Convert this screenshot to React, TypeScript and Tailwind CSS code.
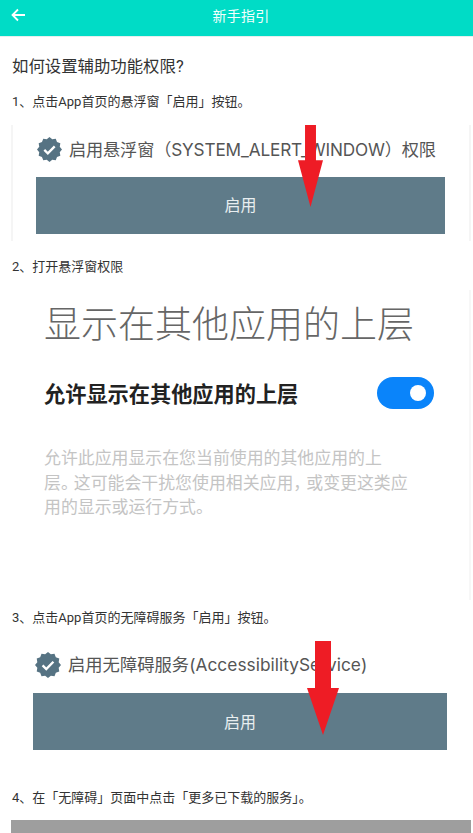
const cjk = "font-['Roboto','Noto_Sans_CJK_SC',sans-serif]";
const shot = "font-['Noto_Sans_CJK_SC',sans-serif]";
const mixed = "font-['Inter','Noto_Sans_CJK_SC',sans-serif]";

function Badge({ className }: { className: string }) {
  const pts: string[] = [];
  for (let i = 0; i < 24; i++) {
    const r = i % 2 === 0 ? 12 : 10.2;
    const a = (i * Math.PI) / 12;
    pts.push(`${12 + r * Math.cos(a)},${12 + r * Math.sin(a)}`);
  }
  return (
    <svg viewBox="0 0 24 24" className={className}>
      <polygon points={pts.join(" ")} fill="#567383" />
      <path d="M7 12.4l3.4 3.3L17 9" fill="none" stroke="#fff" strokeWidth="2.2" />
    </svg>
  );
}

function Arrow({ className, points }: { className: string; points: string }) {
  return (
    <svg viewBox="0 0 32 100" preserveAspectRatio="none" className={className}>
      <polygon points={points} fill="#ee1c25" />
    </svg>
  );
}

function Step({ children, className }: { children: string; className: string }) {
  return <p className={`px-3 text-[13px] leading-[18px] text-[#333] ${className}`}>{children}</p>;
}

export default function App() {
  return (
    <div className={`h-[833px] w-[473px] overflow-hidden bg-white ${cjk}`}>
      <header className="relative flex h-[37px] items-center justify-center border-b border-[#e4f0ee] bg-[#00dcc6] pb-[5px]">
        <svg viewBox="0 0 16 14" className="absolute left-[10px] top-[8px] h-[14px] w-[16px]">
          <path d="M15 7H2.500M8 1.500L2.500 7 8 12.500" fill="none" stroke="#fff" strokeWidth="1.800" />
        </svg>
        <h1 className="pl-[9px] text-sm font-normal tracking-[0.2px] text-[#f2fffd]">新手指引</h1>
      </header>

      <h2 className="mt-[18px] px-3 text-[16.400px] leading-[24px] font-normal text-[#333]">如何设置辅助功能权限?</h2>
      <Step className="mt-[14px]">1、点击App首页的悬浮窗「启用」按钮。</Step>

      <section className={`relative ml-[11px] mt-[14px] h-[116px] w-[460px] border-x-2 border-x-[#f5f5f5] pl-[23px] pr-[24px] ${shot}`}>
        <div className="flex h-[52px] items-center pb-[3px] pl-[1px]">
          <Badge className="h-[25px] w-[25px]" />
          <span className={`ml-[7px] whitespace-nowrap text-[17.200px] tracking-[-0.15px] text-[#555] ${mixed}`}>启用悬浮窗（SYSTEM_ALERT_WINDOW）权限</span>
        </div>
        <div className="flex h-[57px] items-center justify-center bg-[#5f7b89] pb-[3px] text-base font-normal text-[#e8eef0]">启用</div>
        <Arrow points="9,0 23,0 23,43 32,43 16,100 0,43 9,43" className="absolute left-[285px] top-0 h-[82px] w-[25px]" />
      </section>

      <Step className="mt-[17px]">2、打开悬浮窗权限</Step>

      <section className={`ml-[11px] mt-[14px] h-[310px] w-[460px] border-r-2 border-r-[#f7f7f7] pl-[33px] pr-[35px] ${shot}`}>
        <div className="whitespace-nowrap pt-[8px] text-[37px] leading-[48px] font-light text-[#666]">显示在其他应用的上层</div>
        <div className="mt-[31px] flex h-[32px] items-center justify-between">
          <span className="whitespace-nowrap text-[21.200px] font-bold text-[#222]">允许显示在其他应用的上层</span>
          <span className="flex h-[32px] w-[57px] items-center justify-end rounded-full bg-[#0a84fa] pr-[8px]">
            <span className="h-4 w-4 rounded-full bg-white" />
          </span>
        </div>
        <p className="mt-[36px] whitespace-nowrap text-[16.900px] leading-[24.500px] text-[#c4c4c4]">
          允许此应用显示在您当前使用的其他应用的上<br />
          层<span className="tracking-[-4px]">。</span>这可能会干扰您使用相关应用<span className="tracking-[-4px]">，</span>或变更这类应<br />
          用的显示或运行方式。
        </p>
      </section>

      <Step className="mt-[9px]">3、点击App首页的无障碍服务「启用」按钮。</Step>

      <section className={`relative ml-[11px] mt-[14px] h-[130px] w-[460px] pl-[22px] pr-[24px] ${shot}`}>
        <div className="flex h-[52px] items-center pb-[4px] pl-[2px]">
          <Badge className="h-[26px] w-[26px]" />
          <span className={`ml-[7px] whitespace-nowrap text-[17.300px] tracking-[0.03px] text-[#555] ${mixed}`}>启用无障碍服务(AccessibilityService)</span>
        </div>
        <div className="flex h-[57px] items-center justify-center bg-[#5f7b89] pb-[2px] text-base font-normal text-[#e8eef0]">启用</div>
        <Arrow points="8,0 24,0 24,50 32,50 16,100 0,50 8,50" className="absolute left-[296px] top-0 h-[94px] w-[32px]" />
      </section>

      <Step className="mt-[18px]">4、在「无障碍」页面中点击「更多已下载的服务」。</Step>
      <div className="ml-[11px] mt-[13px] h-[20px] w-[460px] bg-[#9e9e9e]" />
    </div>
  );
}
